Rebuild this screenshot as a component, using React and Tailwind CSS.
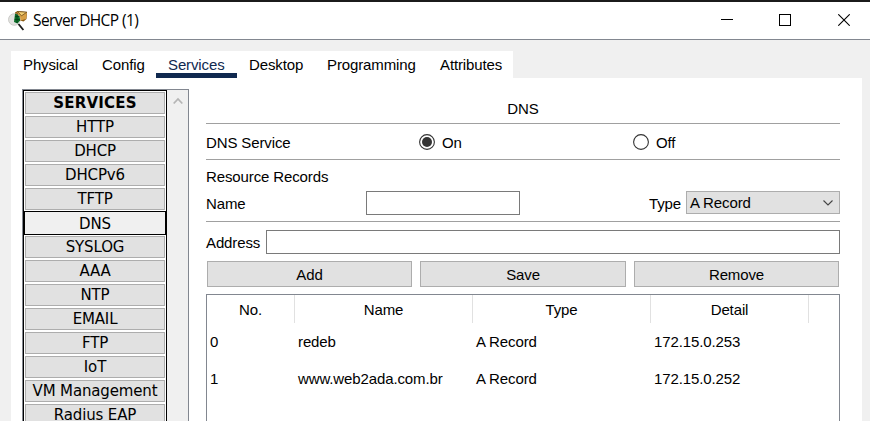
const tabs = [
  { label: "Physical", width: "w-[79px]" },
  { label: "Config", width: "w-[66px]" },
  { label: "Services", width: "w-[81px]", active: true },
  { label: "Desktop", width: "w-[78px]" },
  { label: "Programming", width: "w-[113px]" },
  { label: "Attributes", width: "w-[85px]" },
];

const services = ["HTTP", "DHCP", "DHCPv6", "TFTP", "DNS", "SYSLOG", "AAA", "NTP", "EMAIL", "FTP", "IoT", "VM Management", "Radius EAP"];

const records = [
  { no: "0", name: "redeb", type: "A Record", detail: "172.15.0.253" },
  { no: "1", name: "www.web2ada.com.br", type: "A Record", detail: "172.15.0.252" },
];

function AppIcon() {
  return (
    <svg className="block h-[22px] w-[22px] shrink-0" viewBox="0 0 22 22">
      <path d="M7 2.5 L9.5 1 L19 2 L18.5 9 L15.5 11.5 L7 9Z" fill="#8a5a12" />
      <path d="M9 1.5 L19 2 L18 9 L12.5 10.5Z" fill="#d8a045" />
      <path d="M9.5 1.5 L18.8 2.2 L13.5 5.8Z" fill="#f4cf72" stroke="#5a3c12" strokeWidth=".7" />
      <circle cx="6.3" cy="9.5" r="5.8" fill="#e2e2e0" stroke="#c2c2be" strokeWidth=".8" />
      <path d="M7 3.8 A5.8 5.8 0 0 1 12 10.5 L9.5 13.5 L6 12Z" fill="#0b6f28" />
      <path d="M7 6.5h4.5M6.7 9.5h5M9 4v9" stroke="#063d18" strokeWidth=".8" />
      <path d="M10.5 14 L15.4 20" stroke="#1b1b1b" strokeWidth="1.8" />
    </svg>
  );
}

function TitleBar() {
  return (
    <header className="flex h-10 border-t-2 border-b border-t-[#1b1b1b] border-b-[#828790] bg-white">
      <div className="flex flex-1 pt-[8px] pl-2">
        <AppIcon />
        <span className="ml-[3px] h-[22px] font-['Open_Sans',sans-serif] text-[15.5px] leading-[21px] tracking-[-0.6px]">Server DHCP (1)</span>
      </div>
      <div className="flex gap-[46px] pt-[12px] pr-[20px]">
        <svg className="h-3 w-3" viewBox="0 0 12 12" shapeRendering="crispEdges"><path d="M0 5.5h12" stroke="#000" /></svg>
        <svg className="h-3 w-3" viewBox="0 0 12 12" shapeRendering="crispEdges"><rect x=".5" y=".5" width="11" height="11" fill="none" stroke="#000" /></svg>
        <svg className="ml-px h-3 w-3" viewBox="0 0 12 12"><path d="M.3.3l11.4 11.4M11.7.3L.3 11.7" stroke="#000" strokeWidth="1.1" /></svg>
      </div>
    </header>
  );
}

function Sidebar() {
  return (
    <aside className="flex h-[400px] w-[167px] shrink-0 border border-[#828790] font-['DejaVu_Sans',sans-serif] text-[15px] tracking-[-0.15px]">
      <div className="flex w-[144px] flex-col items-center border border-black bg-white pt-px">
        <div className="mb-0.5 flex h-[22px] w-[140px] shrink-0 items-center justify-center border border-[#adadad] bg-[#e1e1e1] font-bold tracking-[0.2px]">SERVICES</div>
        {services.map((s) =>
          s === "DNS" ? (
            <div key={s} className="-mt-px mb-px flex h-6 w-[142px] shrink-0 items-center justify-center border border-black bg-[#f0f0f0] pt-0.5">{s}</div>
          ) : (
            <div key={s} className="mb-0.5 flex h-[22px] w-[140px] shrink-0 items-center justify-center border border-[#adadad] bg-[#e1e1e1] whitespace-nowrap">{s}</div>
          )
        )}
      </div>
      <div className="flex flex-1 justify-center bg-[#f0f0f0] pt-[7px]">
        <svg className="h-2 w-[10px]" viewBox="0 0 10 8"><path d="M.7 6.5L5 2l4.3 4.5" fill="none" stroke="#b5b5b5" strokeWidth="1.8" /></svg>
      </div>
    </aside>
  );
}

function Radio({ label, checked }) {
  return (
    <div className="flex w-[214px] shrink-0 items-center gap-[7px]">
      <svg className="h-4 w-4" viewBox="0 0 16 16">
        <circle cx="8" cy="8" r="7.4" fill="#fff" stroke="#333" strokeWidth="1.1" />
        {checked && <circle cx="8" cy="8" r="5" fill="#333" />}
      </svg>
      <span className="relative top-px">{label}</span>
    </div>
  );
}

function RecordsTable() {
  return (
    <div className="mt-[7px] h-[200px] border border-[#828790]">
      <div className="flex h-7 text-center leading-[29px]">
        <div className="w-[88px] border-r border-[#e1e1e1]">No.</div>
        <div className="w-[178px] border-r border-[#e1e1e1]">Name</div>
        <div className="w-[178px] border-r border-[#e1e1e1]">Type</div>
        <div className="w-[158px] border-r border-[#e1e1e1]">Detail</div>
      </div>
      {records.map((r) => (
        <div key={r.no} className="flex h-[37px] pl-[3px] leading-[37px]">
          <div className="w-[88px]">{r.no}</div>
          <div className="w-[178px]">{r.name}</div>
          <div className="w-[178px]">{r.type}</div>
          <div>{r.detail}</div>
        </div>
      ))}
    </div>
  );
}

export default function App() {
  return (
    <div className="flex h-[421px] w-[870px] flex-col overflow-hidden bg-[#f0f0f0] font-['Liberation_Sans',Arial,sans-serif] text-[15px] leading-[18px] tracking-[-0.12px] text-black">
      <TitleBar />
      <nav className="mt-[11px] ml-[11px] flex h-[27px] w-[502px] shrink-0 bg-white">
        {tabs.map((t) => (
          <div key={t.label} className={`${t.width} ${t.active ? "border-b-[5px] border-[#10294f] text-[#10294f]" : ""} pt-[5px] pl-3`}>{t.label}</div>
        ))}
      </nav>
      <div className="ml-[11px] flex w-[851px] flex-1 items-start overflow-hidden bg-white pt-[11px] pl-[11px]">
        <Sidebar />
        <main className="ml-[17px] w-[634px] shrink-0">
          <div className="h-[35px] border-b border-[#a0a0a0] pt-[11px] text-center">DNS</div>
          <div className="flex h-9 items-center border-b border-[#a0a0a0]">
            <span className="relative top-px w-[213px] shrink-0">DNS Service</span>
            <Radio label="On" checked />
            <Radio label="Off" />
          </div>
          <div className="pt-[8px]">Resource Records</div>
          <div className="flex h-[36px] border-b border-[#a0a0a0] pt-[5px]">
            <span className="w-[160px] pt-1">Name</span>
            <div className="h-6 w-[154px] border border-[#7a7a7a] bg-white" />
            <span className="ml-[123px] w-[43px] pt-1 pl-[6px]">Type</span>
            <div className="flex h-[23px] w-[154px] items-center justify-between border border-[#adadad] bg-[#e1e1e1] pr-[6px] pl-[3px]">
              <span>A Record</span>
              <svg className="h-[6px] w-[10px]" viewBox="0 0 10 6"><path d="M.5.5L5 5 9.5.5" fill="none" stroke="#444" strokeWidth="1.1" /></svg>
            </div>
          </div>
          <div className="flex h-8 pt-2">
            <span className="w-[60px] pt-1">Address</span>
            <div className="h-6 flex-1 border border-[#7a7a7a] bg-white" />
          </div>
          <div className="mt-[7px] flex justify-between px-px text-center leading-[25px]">
            <div className="h-[26px] w-[205px] border border-[#adadad] bg-[#e1e1e1]">Add</div>
            <div className="h-[26px] w-[206px] border border-[#adadad] bg-[#e1e1e1]">Save</div>
            <div className="h-[26px] w-[205px] border border-[#adadad] bg-[#e1e1e1]">Remove</div>
          </div>
          <RecordsTable />
        </main>
      </div>
    </div>
  );
}
